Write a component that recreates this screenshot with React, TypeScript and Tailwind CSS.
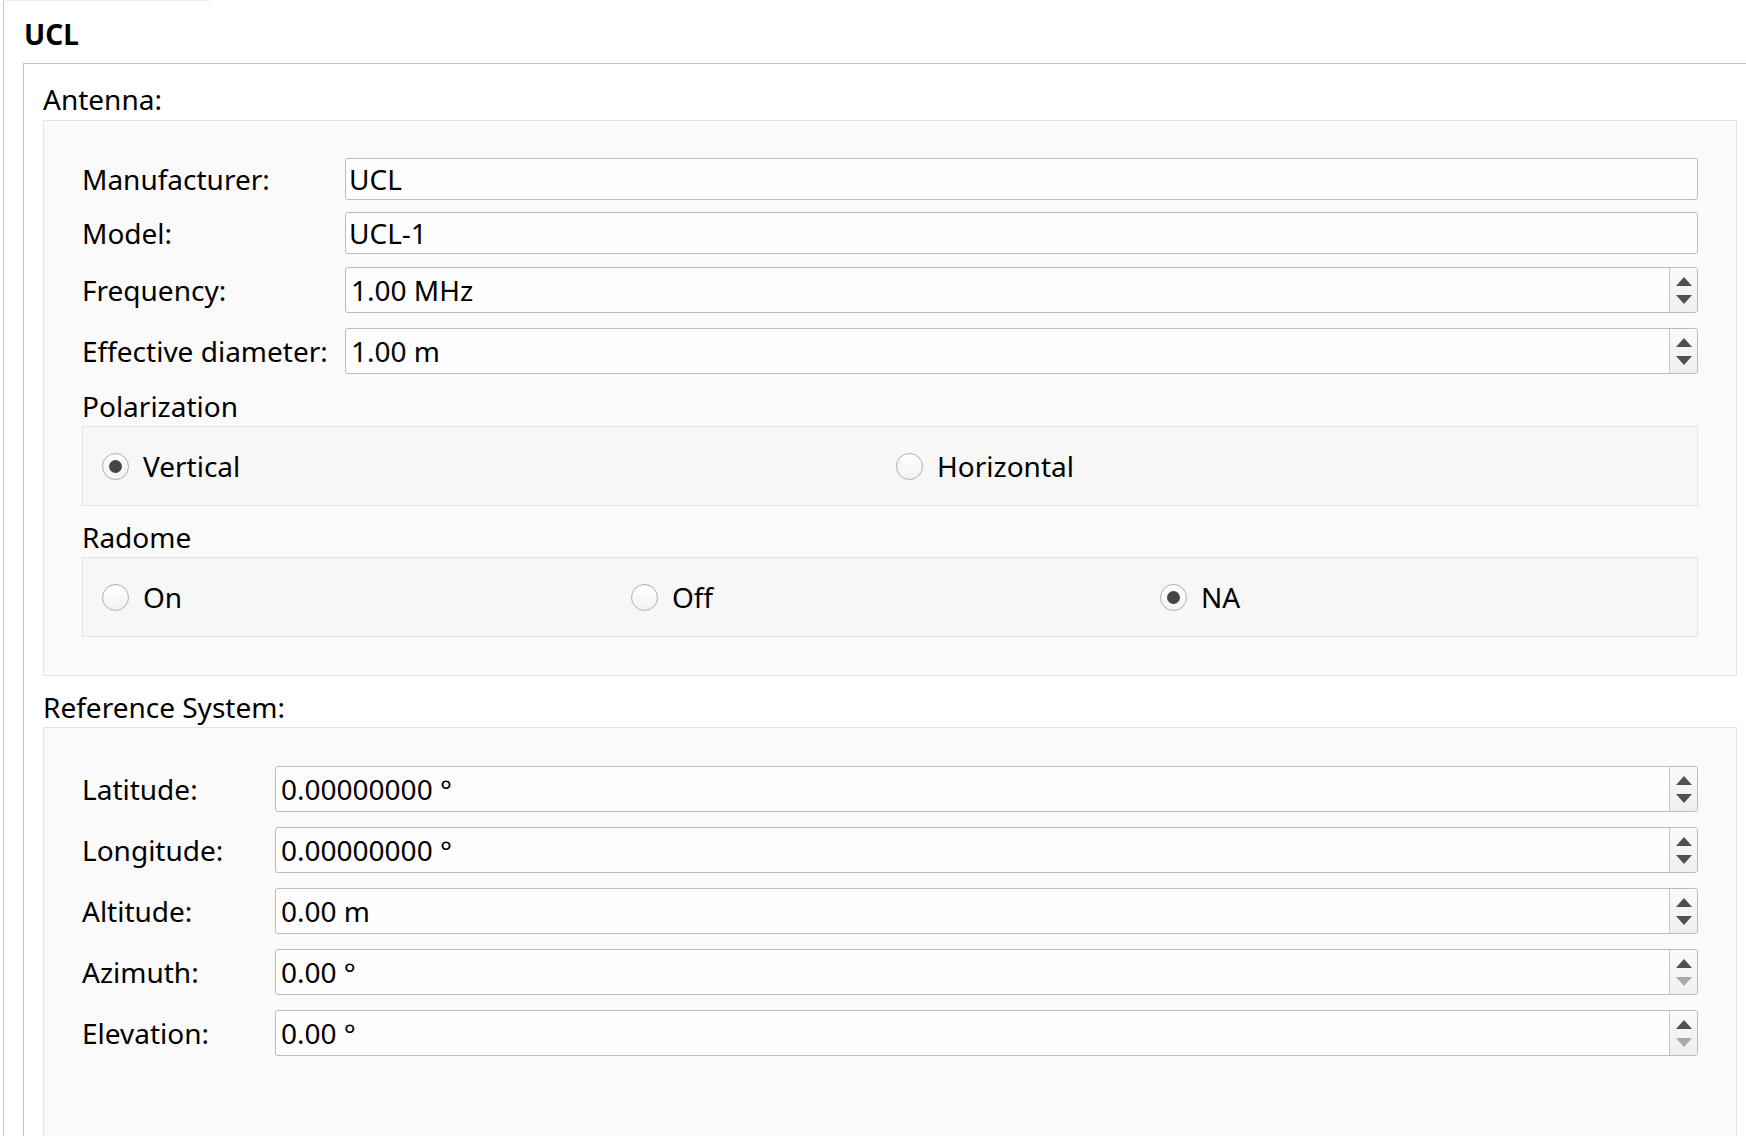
import React from "react";

const font = "font-['Noto_Sans','Open_Sans',sans-serif]";

function Arrow({ dir, enabled }: { dir: "up" | "down"; enabled: boolean }) {
  return (
    <svg width="16" height="9" viewBox="0 0 16 9" className="block">
      <polygon
        points={dir === "up" ? "8,0 16,9 0,9" : "0,0 16,0 8,9"}
        fill={enabled ? "#505050" : "#a9a9a9"}
      />
    </svg>
  );
}

function TextField({ value }: { value: string }) {
  return (
    <div className="flex-1 h-[42px] border border-[#bcbcbc] rounded-[3px] bg-[#fefefe] flex items-center pl-[3px] text-[28px] text-black">
      {value}
    </div>
  );
}

function SpinField({ value, downEnabled = true }: { value: string; downEnabled?: boolean }) {
  return (
    <div className="flex-1 h-[46px] border border-[#bcbcbc] rounded-[3px] bg-[#fefefe] flex">
      <div className="flex-1 flex items-center pl-[5px] text-[28px] text-black">{value}</div>
      <div className="w-[28px] border-l border-[#c8c8c8] bg-gradient-to-b from-[#fafafa] to-[#efefef] rounded-r-[3px] flex flex-col items-center justify-center gap-[9px]">
        <Arrow dir="up" enabled />
        <Arrow dir="down" enabled={downEnabled} />
      </div>
    </div>
  );
}

function Row({ label, labelW, children, mt }: { label: string; labelW: string; children: React.ReactNode; mt: string }) {
  return (
    <div className={`flex items-center ${mt}`}>
      <div className={`${labelW} shrink-0 text-[28px] text-black`}>{label}</div>
      {children}
    </div>
  );
}

function Radio({ label, checked }: { label: string; checked?: boolean }) {
  return (
    <div className="flex items-center gap-[14px]">
      <div className="w-[27px] h-[27px] rounded-full border border-[#adadad] bg-gradient-to-b from-[#ffffff] to-[#f3f3f3] flex items-center justify-center">
        {checked && <div className="w-[13px] h-[13px] rounded-full bg-[#454545]" />}
      </div>
      <span className="text-[28px] text-black">{label}</span>
    </div>
  );
}

export default function App() {
  return (
    <div className={`${font} w-full h-[1136px] overflow-hidden bg-white relative`}>
      <div className="absolute left-[3px] top-0 w-[207px] h-px bg-[#ececec]" />
      <div className="ml-[3px] h-full border-l border-[#c4c4c4] pt-[14px] pl-[19px]">
        <div className="ml-px h-[40px] leading-[40px] text-[28px] font-bold text-black">UCL</div>

        {/* group frame */}
        <div className="mt-[9px] w-[1770px] h-[1100px] border-t border-l border-[#c4c4c4] pt-[15px] pl-[19px]">
          <div className="h-[41px] leading-[41px] text-[28px] text-black">Antenna:</div>

          <div className="w-[1694px] border border-[#e3e3e3] bg-[#fafafa] pt-[37px] pb-[38px] px-[38px]">
            <Row label="Manufacturer:" labelW="w-[263px]" mt="mt-0">
              <TextField value="UCL" />
            </Row>
            <Row label="Model:" labelW="w-[263px]" mt="mt-[12px]">
              <TextField value="UCL-1" />
            </Row>
            <Row label="Frequency:" labelW="w-[263px]" mt="mt-[13px]">
              <SpinField value="1.00 MHz" />
            </Row>
            <Row label="Effective diameter:" labelW="w-[263px]" mt="mt-[15px]">
              <SpinField value="1.00 m" />
            </Row>

            <div className="mt-[12px] h-[40px] leading-[40px] text-[28px] text-black">Polarization</div>
            <div className="h-[80px] border border-[#e3e3e3] bg-[#f7f7f7] grid grid-cols-[794px_1fr] items-center pl-[19px]">
              <Radio label="Vertical" checked />
              <Radio label="Horizontal" />
            </div>

            <div className="mt-[11px] h-[40px] leading-[40px] text-[28px] text-black">Radome</div>
            <div className="h-[80px] border border-[#e3e3e3] bg-[#f7f7f7] grid grid-cols-[529px_529px_1fr] items-center pl-[19px]">
              <Radio label="On" />
              <Radio label="Off" />
              <Radio label="NA" checked />
            </div>
          </div>

          <div className="mt-[11px] h-[40px] leading-[40px] text-[28px] text-black">Reference System:</div>
          <div className="w-[1694px] h-[500px] border border-[#e3e3e3] bg-[#fafafa] pt-[38px] px-[38px]">
            <Row label="Latitude:" labelW="w-[193px]" mt="mt-0">
              <SpinField value="0.00000000 °" />
            </Row>
            <Row label="Longitude:" labelW="w-[193px]" mt="mt-[15px]">
              <SpinField value="0.00000000 °" />
            </Row>
            <Row label="Altitude:" labelW="w-[193px]" mt="mt-[15px]">
              <SpinField value="0.00 m" />
            </Row>
            <Row label="Azimuth:" labelW="w-[193px]" mt="mt-[15px]">
              <SpinField value="0.00 °" downEnabled={false} />
            </Row>
            <Row label="Elevation:" labelW="w-[193px]" mt="mt-[15px]">
              <SpinField value="0.00 °" downEnabled={false} />
            </Row>
          </div>
        </div>
      </div>
    </div>
  );
}
